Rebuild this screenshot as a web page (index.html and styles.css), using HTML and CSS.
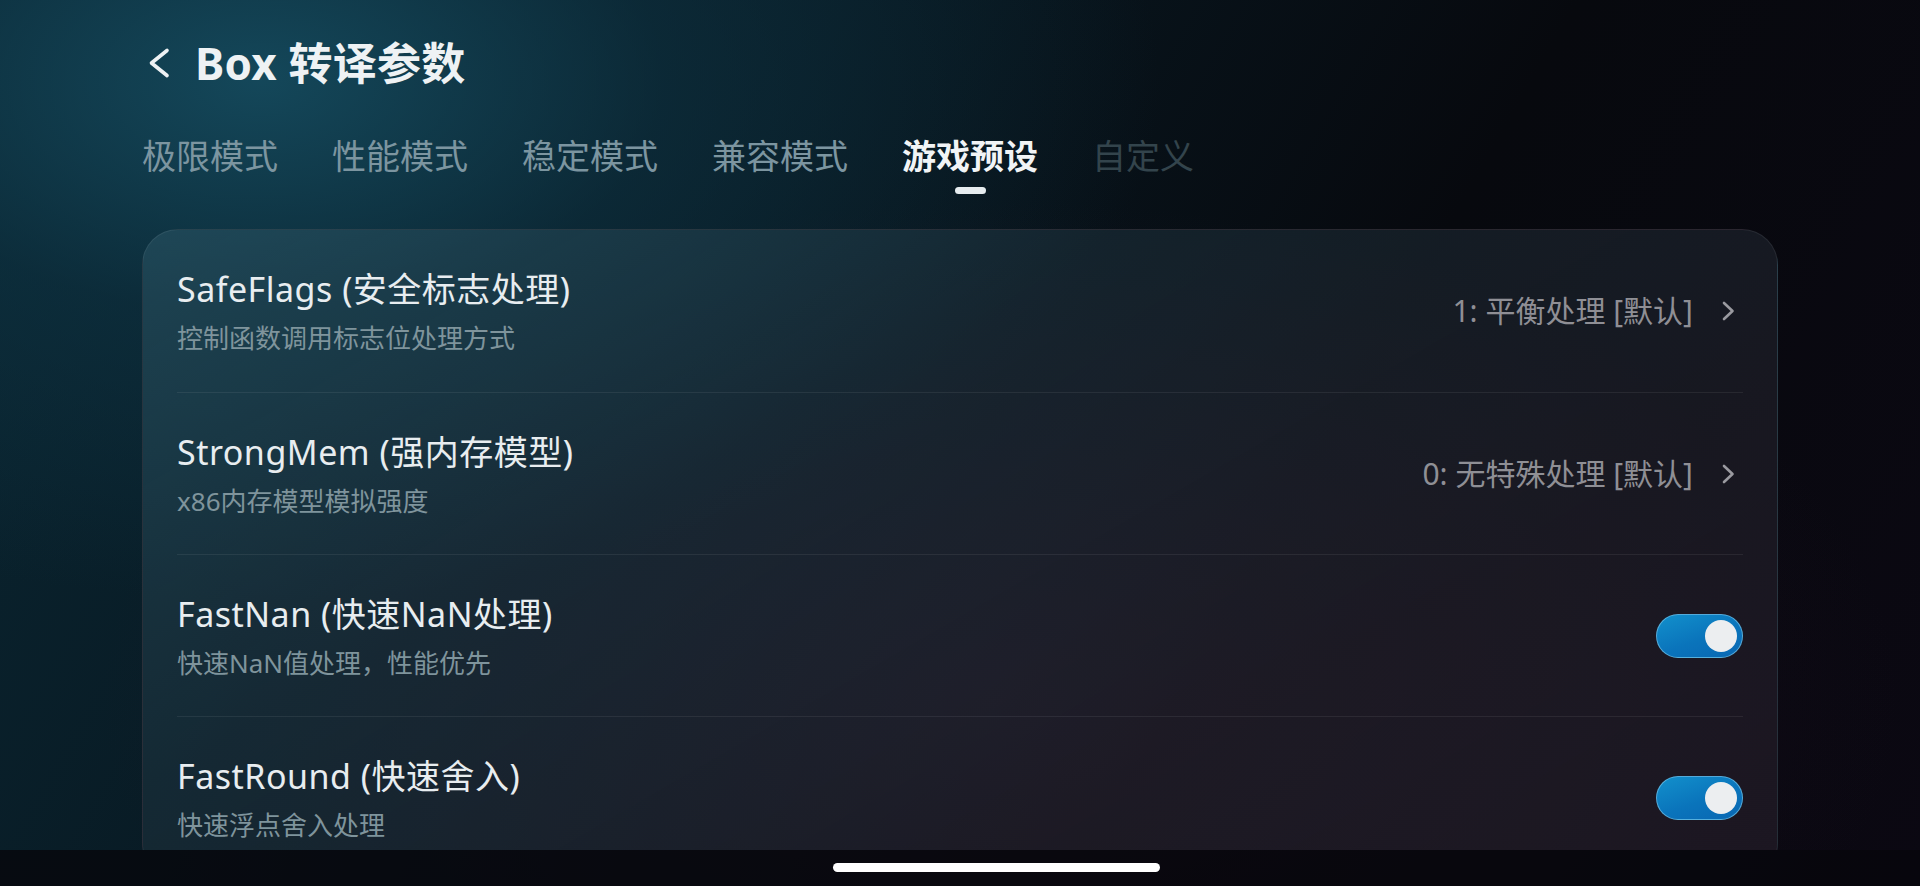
FILE: index.html
```html
<!DOCTYPE html>
<html lang="zh-CN">
<head>
<meta charset="utf-8">
<title>Box 转译参数</title>
<link rel="stylesheet" href="styles.css">
</head>
<body>
<div class="screen">
  <main class="page">
    <header class="topbar">
      <button class="back" aria-label="返回">
        <svg width="24" height="32" viewBox="0 0 24 32"><path d="M19 3.5 L3.5 16 L19 28.5" fill="none" stroke="#eef2f4" stroke-width="3.6" stroke-linecap="round" stroke-linejoin="round"/></svg>
      </button>
      <h1 class="title">Box 转译参数</h1>
    </header>

    <nav class="tabs">
      <span class="tab">极限模式</span>
      <span class="tab">性能模式</span>
      <span class="tab">稳定模式</span>
      <span class="tab">兼容模式</span>
      <span class="tab tab-active">游戏预设</span>
      <span class="tab tab-disabled">自定义</span>
    </nav>

    <section class="card">
      <div class="row">
        <div class="row-text">
          <div class="row-title">SafeFlags (安全标志处理)</div>
          <div class="row-sub">控制函数调用标志位处理方式</div>
        </div>
        <div class="row-value">
          <span>1: 平衡处理 [默认]</span>
          <svg class="chev" width="18" height="24" viewBox="0 0 18 24"><path d="M5 4 L13.5 12 L5 20" fill="none" stroke="#9a9aa0" stroke-width="2.6" stroke-linecap="round" stroke-linejoin="round"/></svg>
        </div>
      </div>
      <div class="row">
        <div class="row-text">
          <div class="row-title">StrongMem (强内存模型)</div>
          <div class="row-sub">x86内存模型模拟强度</div>
        </div>
        <div class="row-value">
          <span>0: 无特殊处理 [默认]</span>
          <svg class="chev" width="18" height="24" viewBox="0 0 18 24"><path d="M5 4 L13.5 12 L5 20" fill="none" stroke="#9a9aa0" stroke-width="2.6" stroke-linecap="round" stroke-linejoin="round"/></svg>
        </div>
      </div>
      <div class="row">
        <div class="row-text">
          <div class="row-title">FastNan (快速NaN处理)</div>
          <div class="row-sub">快速NaN值处理，性能优先</div>
        </div>
        <div class="switch switch-on"><span class="knob"></span></div>
      </div>
      <div class="row">
        <div class="row-text">
          <div class="row-title">FastRound (快速舍入)</div>
          <div class="row-sub">快速浮点舍入处理</div>
        </div>
        <div class="switch switch-on"><span class="knob"></span></div>
      </div>
    </section>
  </main>

  <footer class="gesture">
    <span class="home-bar"></span>
  </footer>
</div>
</body>
</html>
```

FILE: styles.css
```css
* {
  box-sizing: border-box;
}

html, body {
  margin: 0;
  padding: 0;
  width: 1920px;
  height: 886px;
  overflow: hidden;
}

body {
  font-family: "Noto Sans", "Noto Sans CJK SC", sans-serif;
  color: #e8edf0;
  background-color: #07090d;
  background-image:
    radial-gradient(ellipse 900px 520px at 260px 80px, rgba(22, 78, 98, 0.85) 0%, rgba(14, 52, 68, 0.55) 45%, rgba(8, 30, 40, 0) 100%),
    radial-gradient(ellipse 900px 500px at 1000px 700px, rgba(58, 30, 56, 0.35) 0%, rgba(30, 18, 34, 0) 100%),
    linear-gradient(120deg, #0a2632 0%, #081821 35%, #07090e 65%, #0b0812 100%);
}

.screen {
  display: flex;
  flex-direction: column;
  height: 886px;
}

.page {
  height: 850px;
  overflow: hidden;
  padding: 0 142px;
  display: flex;
  flex-direction: column;
}

/* header */
.topbar {
  display: flex;
  align-items: center;
  margin-top: 33px;
  height: 60px;
}

.back {
  display: flex;
  align-items: center;
  background: none;
  border: 0;
  padding: 0;
  margin-left: 6px;
  width: 24px;
  height: 32px;
  cursor: pointer;
}

.title {
  margin: 0 0 0 23px;
  font-size: 44px;
  font-weight: 700;
  line-height: 60px;
  color: #eef2f4;
  letter-spacing: 0.2px;
}

/* tabs */
.tabs {
  display: flex;
  gap: 54px;
  margin-top: 39px;
}

.tab {
  position: relative;
  font-size: 34px;
  line-height: 48px;
  color: #7c95a0;
  white-space: nowrap;
}

.tab-active {
  color: #f1f4f6;
  font-weight: 700;
}

.tab-active::after {
  content: "";
  position: absolute;
  left: 50%;
  top: 55px;
  width: 31px;
  height: 7px;
  margin-left: -15px;
  border-radius: 4px;
  background: #e6ecef;
}

.tab-disabled {
  color: #33444c;
}

/* settings card */
.card {
  margin-top: 49px;
  border-radius: 36px;
  padding: 0 34px;
  border: 1px solid rgba(255, 255, 255, 0.07);
  border-bottom: 0;
  background:
    linear-gradient(150deg, rgba(44, 86, 102, 0.55) 0%, rgba(34, 58, 70, 0.45) 35%, rgba(36, 36, 46, 0.55) 70%, rgba(40, 32, 44, 0.6) 100%);
  flex-shrink: 0;
}

.row {
  display: flex;
  align-items: center;
  justify-content: space-between;
  height: 162px;
  border-bottom: 1px solid rgba(255, 255, 255, 0.07);
}

.row:first-child {
  height: 163px;
}

.row:last-child {
  border-bottom: 0;
}

.row-text {
  display: flex;
  flex-direction: column;
  gap: 8px;
}

.row-title {
  font-size: 34px;
  line-height: 46px;
  letter-spacing: 0.5px;
  color: #e8edf0;
}

.row-sub {
  font-size: 26px;
  line-height: 36px;
  color: #7f949c;
}

.row-value {
  display: flex;
  align-items: center;
  gap: 26px;
  font-size: 30px;
  line-height: 40px;
  color: #8f8f95;
  white-space: pre;
}

.chev {
  margin-right: 6px;
}

/* toggle switch */
.switch {
  width: 87px;
  height: 44px;
  border-radius: 22px;
  display: flex;
  align-items: center;
  justify-content: flex-end;
  padding-right: 5px;
  border: 1.5px solid rgba(110, 190, 228, 0.75);
  background: linear-gradient(160deg, #1290cc 0%, #0a74bb 55%, #0967b3 100%);
}

.knob {
  width: 32px;
  height: 32px;
  border-radius: 50%;
  background: #eceef0;
}

/* gesture bar */
.gesture {
  height: 36px;
  background: rgba(6, 7, 12, 0.78);
  display: flex;
  align-items: flex-start;
}

.home-bar {
  display: block;
  margin-top: 13px;
  margin-left: 833px;
  width: 327px;
  height: 9px;
  border-radius: 5px;
  background: #ffffff;
}
```
